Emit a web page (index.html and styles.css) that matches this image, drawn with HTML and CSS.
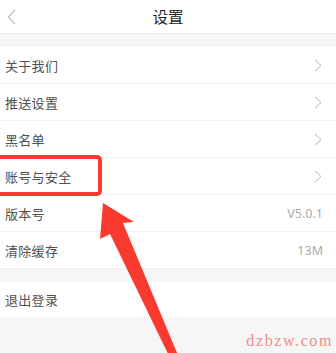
FILE: index.html
```html
<!DOCTYPE html>
<html lang="zh-CN">
<head>
<meta charset="utf-8">
<title>设置</title>
<link rel="stylesheet" href="styles.css">
</head>
<body>
<div class="page">
  <header class="topbar">
    <svg class="back" width="10" height="16" viewBox="0 0 10 16"><polyline points="8,1 1.5,8 8,15" fill="none" stroke="#b0b0b0" stroke-width="1.1"/></svg>
    <h1 class="title">设置</h1>
  </header>
  <div class="gap"></div>
  <ul class="group">
    <li class="row"><span class="label">关于我们</span><svg class="chev" width="8" height="13" viewBox="0 0 8 13"><polyline points="1,1 7,6.5 1,12" fill="none" stroke="#b4b4b4" stroke-width="1"/></svg></li>
    <li class="row"><span class="label">推送设置</span><svg class="chev" width="8" height="13" viewBox="0 0 8 13"><polyline points="1,1 7,6.5 1,12" fill="none" stroke="#b4b4b4" stroke-width="1"/></svg></li>
    <li class="row"><span class="label">黑名单</span><svg class="chev" width="8" height="13" viewBox="0 0 8 13"><polyline points="1,1 7,6.5 1,12" fill="none" stroke="#b4b4b4" stroke-width="1"/></svg></li>
    <li class="row"><span class="label">账号与安全</span><svg class="chev" width="8" height="13" viewBox="0 0 8 13"><polyline points="1,1 7,6.5 1,12" fill="none" stroke="#b4b4b4" stroke-width="1"/></svg></li>
    <li class="row"><span class="label">版本号</span><span class="value">V5.0.1</span></li>
    <li class="row"><span class="label">清除缓存</span><span class="value">13M</span></li>
  </ul>
  <div class="gap"></div>
  <ul class="group">
    <li class="row last"><span class="label">退出登录</span></li>
  </ul>
  <div class="highlight"></div>
  <svg class="arrow" width="336" height="353" viewBox="0 0 336 353"><polygon points="103,203 134,222 123,223 180,360 171,360 110,234 100,239" fill="#fb3a2f"/></svg>
  <span class="watermark">dzbzw.com</span>
</div>
</body>
</html>
```
FILE: styles.css
```css
* { box-sizing: border-box; }
html, body { margin: 0; padding: 0; }
body {
  width: 336px;
  height: 353px;
  overflow: hidden;
  background: #f6f6f6;
  font-family: "Noto Sans CJK SC", "Noto Sans", sans-serif;
}
.page {
  position: relative;
  width: 336px;
  height: 353px;
  background: #f6f6f6;
}
.topbar {
  position: relative;
  height: 34px;
  background: #fff;
  border-bottom: 1px solid #efefef;
  display: flex;
  align-items: center;
  justify-content: center;
}
.back {
  position: absolute;
  left: 7px;
  top: 9px;
}
.title {
  margin: 0;
  font-size: 15.5px;
  font-weight: 400;
  color: #1e1e1e;
  line-height: 1;
}
.gap { height: 13px; }
.group {
  list-style: none;
  margin: 0;
  padding: 0;
  background: #fff;
}
.row {
  height: 37px;
  display: flex;
  align-items: center;
  justify-content: space-between;
  padding: 0 14px 0 5px;
  border-bottom: 1px solid #f0f0f0;
}
.row.last { height: 35px; border-bottom: none; }
.label {
  font-size: 13px;
  color: #505050;
  letter-spacing: 0.3px;
}
.value {
  font-size: 12.5px;
  color: #aaa;
  font-family: "Noto Sans", sans-serif;
  margin-right: -1px;
}
.highlight {
  position: absolute;
  left: -10px;
  top: 155px;
  width: 112px;
  height: 41px;
  border: 4.5px solid #fb3a2f;
  border-radius: 5px;
}
.arrow {
  position: absolute;
  left: 0;
  top: 0;
}
.watermark {
  position: absolute;
  right: 3px;
  top: 331px;
  font-family: "Liberation Serif", serif;
  font-size: 16px;
  letter-spacing: 1.6px;
  line-height: 20px;
  color: #ee8c8c;
}
```
